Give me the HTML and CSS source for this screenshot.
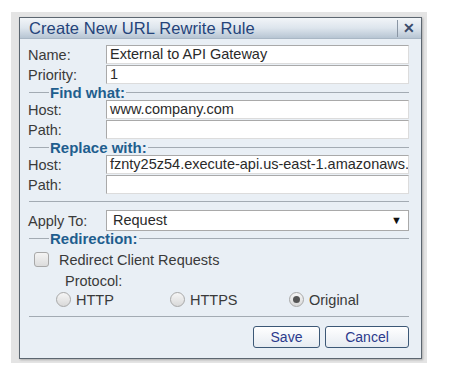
FILE: index.html
```html
<!DOCTYPE html>
<html lang="en">
<head>
    <meta charset="UTF-8">
    <title>Create New URL Rewrite Rule</title>
    <link rel="stylesheet" href="styles.css">
</head>
<body>
    <div class="frame">
        <div class="dialog">
            <div class="titlebar">
                <span class="title">Create New URL Rewrite Rule</span>
                <span class="close">&#x2715;</span>
            </div>
            <div class="body">
                <div class="row"><label>Name:</label><div class="field">External to API Gateway</div></div>
                <div class="row"><label>Priority:</label><div class="field">1</div></div>

                <div class="legend"><span>Find what:</span></div>
                <div class="row"><label>Host:</label><div class="field">www.company.com</div></div>
                <div class="row"><label>Path:</label><div class="field"></div></div>

                <div class="legend"><span>Replace with:</span></div>
                <div class="row"><label>Host:</label><div class="field">fznty25z54.execute-api.us-east-1.amazonaws.com</div></div>
                <div class="row"><label>Path:</label><div class="field"></div></div>

                <div class="rule"></div>

                <div class="row apply"><label>Apply To:</label><div class="field select">Request<span class="arrow">&#9660;</span></div></div>

                <div class="legend"><span>Redirection:</span></div>
                <div class="check"><span class="box"></span>Redirect Client Requests</div>
                <div class="protocol">Protocol:</div>
                <div class="radios">
                    <div class="radio"><span class="dot"></span>HTTP</div>
                    <div class="radio"><span class="dot"></span>HTTPS</div>
                    <div class="radio"><span class="dot on"></span>Original</div>
                </div>

                <div class="rule low"></div>

                <div class="buttons">
                    <div class="btn save">Save</div>
                    <div class="btn cancel">Cancel</div>
                </div>
            </div>
        </div>
    </div>
</body>
</html>
```

FILE: styles.css
```css
* {
    margin: 0;
    padding: 0;
    box-sizing: border-box;
}

body {
    background: #fff;
    font-family: 'Liberation Sans', Arial, sans-serif;
    font-size: 14.5px;
    color: #3a3a3a;
    padding: 12px 0 0 11px;
}

.frame {
    width: 416px;
    height: 351px;
    background: #e4e4e4;
    padding: 5px 6px 0 8px;
}

.dialog {
    width: 403px;
    height: 342px;
    border: 1px solid #5c6670;
    background: #e9eff5;
    box-shadow: 1px 1px 2px rgba(0, 0, 0, 0.25);
}

.titlebar {
    height: 21px;
    display: flex;
    align-items: center;
    justify-content: space-between;
    background: linear-gradient(#f2f5f8, #dde5ed 50%, #b7c5d3);
    border-bottom: 1px solid #a9b7c5;
    padding: 0 4px 0 9px;
}

.title {
    font-size: 16.5px;
    letter-spacing: 0.1px;
    color: #24437a;
}

.close {
    font-size: 14px;
    font-weight: bold;
    color: #3a4a6a;
    border-left: 1px solid #8a96a4;
    padding: 0 2px 0 5px;
    line-height: 17px;
}

.body {
    padding: 6px 12px 0 8px;
}

.row {
    display: flex;
    align-items: center;
    height: 19px;
    margin-bottom: 1px;
}

.row label {
    width: 78px;
    line-height: 14px;
}

.field {
    flex: 1;
    height: 19px;
    background: #fff;
    border: 1px solid #a9a9a9;
    border-right-color: #dcdcdc;
    border-bottom-color: #dcdcdc;
    padding: 0 3px;
    line-height: 17px;
    color: #2a2a2a;
    white-space: nowrap;
    overflow: hidden;
}

.legend {
    display: flex;
    align-items: center;
    height: 15px;
    margin-left: 1px;
}

.legend::before {
    content: "";
    width: 20px;
    border-top: 1px solid #a3abb3;
}

.legend::after {
    content: "";
    flex: 1;
    border-top: 1px solid #a3abb3;
}

.legend span {
    font-weight: bold;
    color: #1f5e8e;
    font-size: 15px;
    padding: 0 1px;
}

.rule {
    border-top: 1px solid #a3abb3;
    margin: 7px 0 8px 1px;
}

.apply {
    height: 21px;
    margin-bottom: 0;
}

.select {
    height: 21px;
    padding: 1px 6px 0 6px;
    display: flex;
    justify-content: space-between;
    border: 1px solid #a9a9a9;
}

.arrow {
    font-size: 11px;
    color: #111;
    line-height: 17px;
}

.check {
    display: flex;
    align-items: center;
    height: 21px;
    margin: 3px 0 0 6px;
}

.box {
    width: 15px;
    height: 15px;
    border: 1px solid #a8a8a8;
    border-radius: 3px;
    background: linear-gradient(#f4f4f4, #dcdcdc);
    margin-right: 10px;
}

.protocol {
    margin: 4px 0 0 37px;
    line-height: 15px;
}

.radios {
    display: flex;
    margin: 1px 0 0 28px;
    height: 19px;
    align-items: center;
}

.radio {
    display: flex;
    align-items: center;
}

.radio:nth-child(1) { width: 114px; }
.radio:nth-child(2) { width: 119px; }

.dot {
    width: 15px;
    height: 15px;
    border-radius: 50%;
    border: 1px solid #a8a8a8;
    background: linear-gradient(#f6f6f6, #d9d9d9);
    margin-right: 5px;
    display: flex;
    align-items: center;
    justify-content: center;
}

.dot.on::after {
    content: "";
    width: 7px;
    height: 7px;
    border-radius: 50%;
    background: #555;
}

.low {
    margin: 7px 0 9px 1px;
}

.buttons {
    display: flex;
    justify-content: flex-end;
    gap: 5px;
}

.btn {
    height: 22px;
    border: 1px solid #3c5876;
    border-radius: 3px;
    background: linear-gradient(#ffffff, #e6ebf1);
    color: #2b3a8c;
    font-size: 14px;
    display: flex;
    align-items: center;
    justify-content: center;
}

.save { width: 67px; }
.cancel { width: 84px; }
```
